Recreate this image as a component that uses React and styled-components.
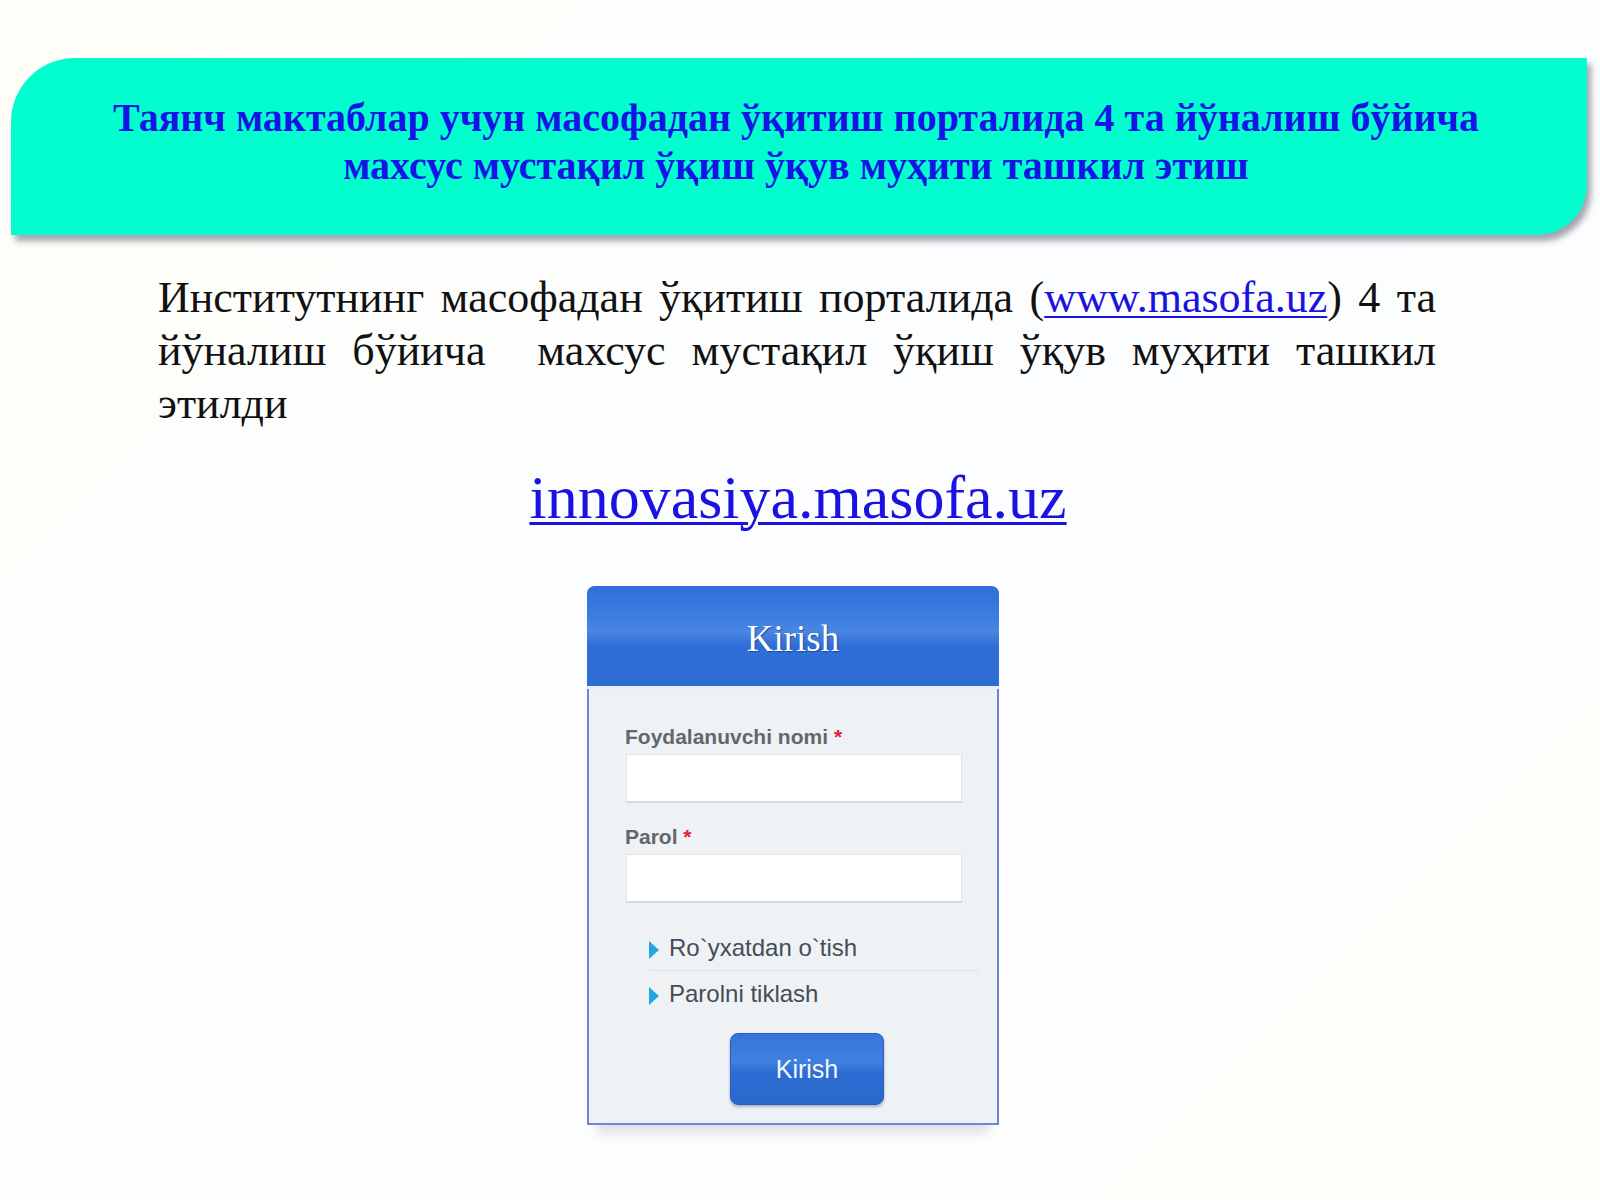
import React from "react";
import styled, { createGlobalStyle } from "styled-components";

const GlobalStyle = createGlobalStyle`
  html, body {
    margin: 0;
    padding: 0;
    background: #fdfdfb;
  }
  body {
    width: 1600px;
    height: 1200px;
    overflow: hidden;
  }
`;

const Page = styled.div`
  width: 1600px;
  height: 1200px;
  padding-top: 58px;
  box-sizing: border-box;
  display: flex;
  flex-direction: column;
  align-items: stretch;
  background: linear-gradient(135deg, #fffef8 0%, #fbfdff 50%, #fffef9 100%);
`;

const Banner = styled.div`
  margin: 0 13px 0 11px;
  height: 177px;
  background: #02fdcf;
  border-top-left-radius: 64px;
  border-bottom-right-radius: 50px;
  box-shadow: 4px 6px 6px rgba(90, 90, 110, 0.55);
  display: flex;
  align-items: center;
  justify-content: center;
  padding: 0 6px 10px 0;
  box-sizing: border-box;
`;

const BannerTitle = styled.h1`
  margin: 0;
  font-family: "Liberation Serif", "DejaVu Serif", serif;
  font-weight: bold;
  font-size: 40px;
  line-height: 48px;
  color: #1414e6;
  text-align: center;
`;

const Lead = styled.p`
  margin: 36px 0 0 158px;
  width: 1278px;
  font-family: "Liberation Serif", "DejaVu Serif", serif;
  font-size: 44px;
  line-height: 53px;
  color: #111;
  text-align: justify;
`;

const Link = styled.a`
  color: #1a12e0;
  text-decoration: underline;
  text-decoration-thickness: 2px;
  text-underline-offset: 4px;
`;

const BigLink = styled(Link)`
  align-self: center;
  margin: 30px 0 0 -4px;
  font-family: "Liberation Serif", "DejaVu Serif", serif;
  font-size: 62px;
  line-height: 74px;
  text-decoration-thickness: 3px;
`;

const LoginWrap = styled.div`
  align-self: center;
  margin: 52px 0 0 -14px;
  width: 412px;
`;

const LoginBox = styled.div`
  border: 2px solid #6f86d6;
  border-top: none;
  border-radius: 8px 8px 0 0;
  background: #eef2f5;
  box-shadow: 0 18px 10px -10px rgba(200, 205, 215, 0.6);
`;

const LoginHeader = styled.div`
  height: 100px;
  margin: 0 -2px;
  border-radius: 8px 8px 0 0;
  background: linear-gradient(
    to bottom,
    #2f6fd8 0%,
    #3b7de0 30%,
    #4a86e2 45%,
    #2f6ed6 60%,
    #2e6cd4 100%
  );
  border-bottom: 3px solid #e6eefc;
  display: flex;
  align-items: center;
  justify-content: center;
`;

const HeaderTitle = styled.span`
  font-family: "Liberation Serif", "DejaVu Serif", serif;
  font-size: 37px;
  color: #ffffff;
  text-shadow: 1px 1px 1px rgba(20, 40, 120, 0.6);
  margin-top: 4px;
`;

const LoginBody = styled.div`
  padding: 36px 36px 18px 36px;
  display: flex;
  flex-direction: column;
`;

const Label = styled.label`
  font-family: "Liberation Sans", Arial, sans-serif;
  font-weight: bold;
  font-size: 21px;
  color: #63676c;
  margin-bottom: 5px;
  span {
    color: #e0203a;
  }
`;

const Input = styled.input`
  width: 336px;
  height: 49px;
  box-sizing: border-box;
  border: 1px solid #e0e4e8;
  border-bottom: 2px solid #d6dade;
  background: #ffffff;
  margin: 0 0 22px 1px;
  outline: none;
`;

const Links = styled.ul`
  list-style: none;
  margin: 0 -18px 0 24px;
  padding: 0;
`;

const LinkItem = styled.li`
  display: flex;
  align-items: center;
  height: 45px;
  font-family: "Liberation Sans", Arial, sans-serif;
  font-size: 24px;
  color: #454c56;
  border-bottom: ${(p) => (p.$sep ? "1px solid #dde2e6" : "none")};
  &::before {
    content: "";
    display: inline-block;
    width: 0;
    height: 0;
    border-top: 9px solid transparent;
    border-bottom: 9px solid transparent;
    border-left: 10px solid #22a8e0;
    margin-right: 10px;
    margin-top: 4px;
  }
`;

const Submit = styled.button`
  align-self: center;
  margin: 17px 0 0 28px;
  width: 154px;
  height: 72px;
  border: 1px solid #2a5cb8;
  border-radius: 8px;
  background: linear-gradient(
    to bottom,
    #3475d8 0%,
    #3f80e0 40%,
    #2d6cd2 55%,
    #2a68cc 100%
  );
  color: #f4f8ff;
  font-family: "Liberation Sans", Arial, sans-serif;
  font-size: 25px;
  box-shadow: 0 2px 3px rgba(30, 60, 120, 0.35);
`;

export default function App() {
  return (
    <>
      <GlobalStyle />
      <Page>
        <Banner>
          <BannerTitle>
            Таянч мактаблар учун масофадан ўқитиш порталида 4 та йўналиш бўйича
            <br />
            махсус мустақил ўқиш ўқув муҳити ташкил этиш
          </BannerTitle>
        </Banner>
        <Lead>
          Институтнинг масофадан ўқитиш порталида (
          <Link href="#">www.masofa.uz</Link>) 4 та йўналиш бўйича&nbsp; махсус
          мустақил ўқиш ўқув муҳити ташкил этилди
        </Lead>
        <BigLink href="#">innovasiya.masofa.uz</BigLink>
        <LoginWrap>
          <LoginBox>
            <LoginHeader>
              <HeaderTitle>Kirish</HeaderTitle>
            </LoginHeader>
            <LoginBody>
              <Label>
                Foydalanuvchi nomi <span>*</span>
              </Label>
              <Input type="text" />
              <Label>
                Parol <span>*</span>
              </Label>
              <Input type="password" />
              <Links>
                <LinkItem $sep>Ro`yxatdan o`tish</LinkItem>
                <LinkItem>Parolni tiklash</LinkItem>
              </Links>
              <Submit>Kirish</Submit>
            </LoginBody>
          </LoginBox>
        </LoginWrap>
      </Page>
    </>
  );
}
